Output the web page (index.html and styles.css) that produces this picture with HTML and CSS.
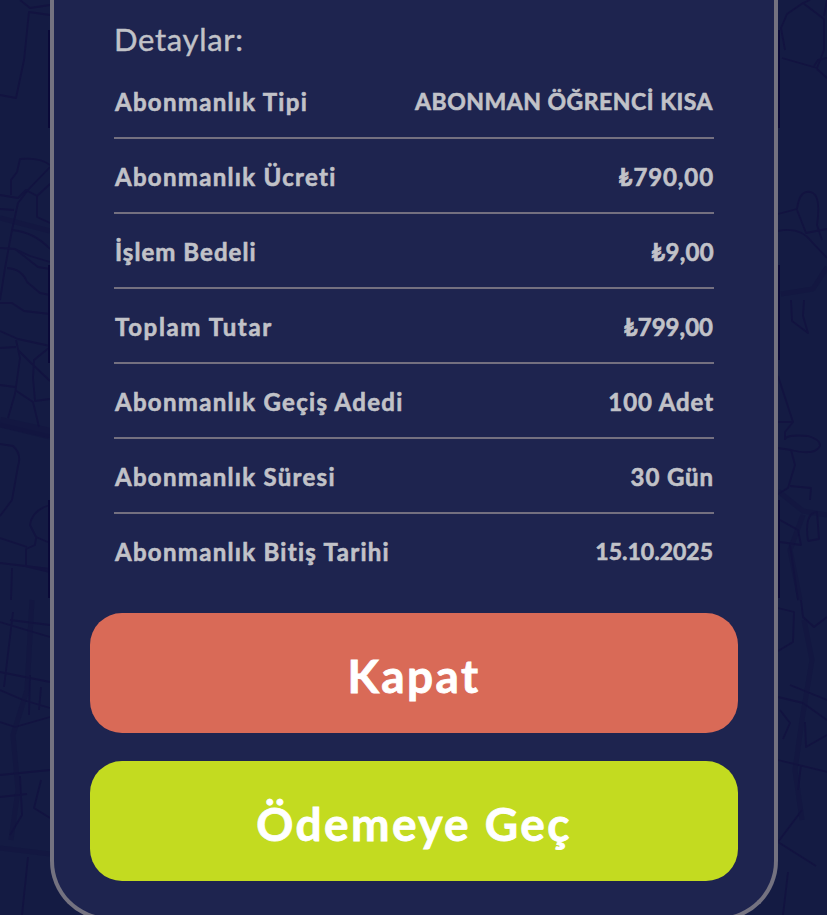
FILE: index.html
```
<!DOCTYPE html>
<html lang="tr">
<head>
    <meta charset="utf-8">
    <meta name="viewport" content="width=device-width, initial-scale=1">
    <title>Abonmanlık Detayları</title>
    <link rel="stylesheet" href="styles.css">
</head>
<body>
    <!-- street map behind the card -->
    <svg class="map" viewBox="0 0 827 915" aria-hidden="true">
        <g class="street">
            <path d="M0 95L16 98L24 60L29 12L50 15M20 0L30 8L50 5" />
            <path d="M50 165Q40 157 20 159L17 172L11 180L11 195M50 167L28 190L18 203L12 230L5 268L0 300" />
            <path d="M0 195L18 198L26 190L37 196L50 184M37 196L37 217L50 223M0 209L14 210M12 230Q34 232 50 249M0 248L15 249L30 256L50 262M15 249L38 267L50 269M7 268Q22 269 27 282L40 293L50 295" />
            <path d="M0 303L12 303L24 311L50 314M0 331L18 339L50 346M0 348L16 347M16 340L20 358L15 394L8 418M18 350L30 362L50 381M50 347L34 360L33 378L35 401L50 399M15 390L33 402L39 427M0 385L15 387" />
            <path d="M0 444L13 446Q22 454 18 466L12 500L0 516M50 505Q32 510 30 525L36 537L50 543M36 538L35 545L26 549L26 566M0 538L27 547M0 563L50 569M12 568L11 600M25 566L50 572" />
            <path d="M0 622L50 637M13 612L4 687M0 672L50 682M0 690L23 700L50 708M30 675L29 715M41 687L39 710M10 620L50 625M0 722L15 727L50 717M0 775L50 770M0 797L27 794M20 776L22 815L10 835M28 857L22 915M41 780L34 808L50 818" />
            <path d="M785 50L781 28L787 14L803 3L824 19L824 50L817 68L782 58M803 3L810 0M824 16L827 0M814 66L818 60L827 58M817 69L827 78" />
            <path d="M778 214L797 209Q800 187 813 193Q821 198 817 225L822 240M778 231Q800 226 812 242L827 258M797 210L806 233L827 229" />
            <path d="M791 300L792 321L808 333L803 316L804 300M778 376L793 422L785 432L785 440M778 422H793M785 440Q785 434 808 436Q821 440 820 446Q815 456 791 450L795 465L788 488L778 494M778 448L791 450M790 486L811 488L810 500" />
            <path d="M808 541Q804 513 817 512L819 539L808 541M780 520L798 530L801 545L780 542M790 545L798 600M778 608L794 612L793 642L778 651M801 600L803 617L814 627L827 617M778 697L803 703L827 720M780 710L790 723L783 739M805 722L806 747L827 735M778 760L827 772M801 765L798 790M802 810L778 842L816 866M788 872L783 915M790 685L827 700" />
        </g>
        <path class="road" d="M0 218L50 231M0 425L50 437M32 600L27 690L13 735L18 790L11 840M0 848L50 854M778 491L803 511L827 515M803 515L790 550L800 600M804 620L812 660L802 720L795 770L802 820M827 267L813 289L781 294" />
        <path class="road-wide" d="M0 422L50 433" />
        <path class="edge" d="M49 30V128M49 265V363M49 500V598M779 30V128M779 265V360M779 500V598" />
    </svg>

    <div class="card">
        <h1>Detaylar:</h1>
        <dl class="details">
            <div class="row">
                <dt>Abonmanlık Tipi</dt>
                <dd class="type">ABONMAN ÖĞRENCİ KISA</dd>
            </div>
            <div class="row">
                <dt>Abonmanlık Ücreti</dt>
                <dd>₺790,00</dd>
            </div>
            <div class="row">
                <dt class="fee-label">İşlem Bedeli</dt>
                <dd class="fee">₺9,00</dd>
            </div>
            <div class="row">
                <dt class="total-label">Toplam Tutar</dt>
                <dd class="total">₺799,00</dd>
            </div>
            <div class="row">
                <dt>Abonmanlık Geçiş Adedi</dt>
                <dd>100 Adet</dd>
            </div>
            <div class="row">
                <dt>Abonmanlık Süresi</dt>
                <dd>30 Gün</dd>
            </div>
            <div class="row">
                <dt>Abonmanlık Bitiş Tarihi</dt>
                <dd class="end">15.10.2025</dd>
            </div>
        </dl>
        <div class="buttons">
            <button type="button" class="btn btn-close">Kapat</button>
            <button type="button" class="btn btn-pay">Ödemeye Geç</button>
        </div>
    </div>
</body>
</html>
```

FILE: styles.css
```
* {
    box-sizing: border-box;
}

body {
    margin: 0;
    height: 915px;
    overflow: hidden;
    background-color: #141b43;
    font-family: Lato, "Open Sans", sans-serif;
    color: #c1c2c8;
}

.map {
    position: absolute;
    top: 0;
    left: 0;
    width: 827px;
    height: 915px;
    fill: none;
    stroke: #121340;
    stroke-linejoin: round;
}

.street {
    stroke-width: 1.8;
}

.road {
    stroke-width: 5;
    opacity: .5;
}

.road-wide {
    stroke-width: 10;
    opacity: .5;
}

.edge {
    stroke: #0a0938;
    stroke-width: 2;
}

.card {
    position: relative;
    width: 728px;
    height: 921px;
    margin-left: 50px;
    padding: 19px 36px 36px;
    background-color: #1e244f;
    border: 4px solid #747280;
    border-top: 0;
    border-radius: 0 0 60px 60px;
}

h1 {
    margin: 0 24px;
    font-size: 31px;
    line-height: 40px;
    font-weight: 400;
    letter-spacing: .7px;
    -webkit-text-stroke: .4px;
}

.details {
    margin: 5px 24px 24px;
}

.row {
    display: flex;
    justify-content: space-between;
    align-items: center;
    height: 75px;
    padding-top: 2px;
    border-bottom: 2px solid #747080;
    font-size: 24px;
    font-weight: 700;
    line-height: 29px;
    white-space: nowrap;
    -webkit-text-stroke: .6px;
}

    .row:last-child {
        border-bottom-color: transparent;
    }

dt {
    padding-left: 1px;
    letter-spacing: 1.3px;
}

dd {
    margin: 0;
    letter-spacing: .9px;
}

.fee-label {
    letter-spacing: 1.05px;
}

.total-label {
    letter-spacing: 1.65px;
}

.type {
    padding-right: 1px;
    font-size: 23px;
    letter-spacing: .5px;
}

.fee {
    letter-spacing: .3px;
}

.total {
    padding-right: 1px;
    letter-spacing: 0;
}

.end {
    padding-right: 1px;
    font-size: 23px;
    letter-spacing: 0;
}

.buttons {
    display: flex;
    flex-direction: column;
    gap: 28px;
}

.btn {
    height: 120px;
    padding: 5px 0 0;
    border: 0;
    border-radius: 32px;
    font-family: inherit;
    font-size: 46px;
    font-weight: 700;
    letter-spacing: 2.4px;
    color: #fff;
    -webkit-text-stroke: .8px;
}

.btn-close {
    background-color: #d96a57;
}

.btn-pay {
    background-color: #c3db20;
}
```
